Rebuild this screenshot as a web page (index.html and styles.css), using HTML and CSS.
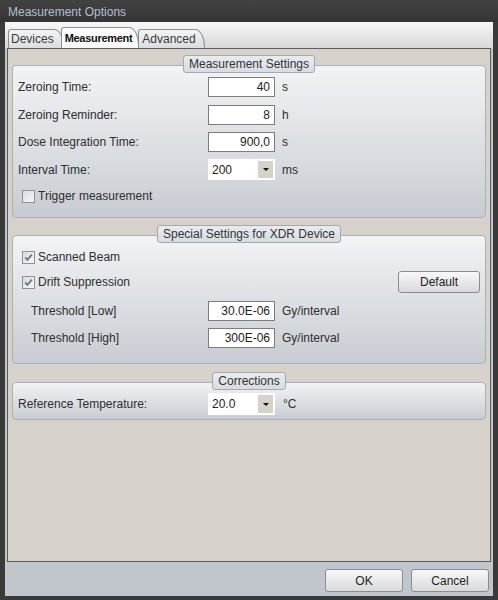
FILE: index.html
```html
<!DOCTYPE html>
<html>
<head>
<meta charset="utf-8">
<link rel="stylesheet" href="styles.css">
</head>
<body>
<div class="window">
  <div class="titlebar">Measurement Options</div>
  <div class="client">
    <div class="tabstrip">
      <div class="tab tab-devices">Devices</div>
      <div class="tab tab-active">Measurement</div>
      <div class="tab tab-advanced">Advanced</div>
    </div>
    <div class="panel">
      <section class="group">
        <div class="legend">Measurement Settings</div>
        <div class="box box-measure">
          <div class="row"><span class="label">Zeroing Time:</span><span class="input">40</span><span class="unit">s</span></div>
          <div class="row r-gap8"><span class="label">Zeroing Reminder:</span><span class="input">8</span><span class="unit">h</span></div>
          <div class="row r-gap7"><span class="label">Dose Integration Time:</span><span class="input">900,0</span><span class="unit">s</span></div>
          <div class="row row-combo r-gap7"><span class="label">Interval Time:</span><span class="combo"><span class="combo-text">200</span><span class="combo-btn"><span class="arrow"></span></span></span><span class="unit">ms</span></div>
          <div class="row row-check r-gap8"><span class="check"></span><span class="check-label">Trigger measurement</span></div>
        </div>
      </section>
      <section class="group g-special">
        <div class="legend">Special Settings for XDR Device</div>
        <div class="box box-special">
          <div class="row"><span class="check checked"><svg width="11" height="11" viewBox="0 0 11 11"><path d="M2.2 5.4 L4.4 7.8 L8.8 2.6" fill="none" stroke="#6b7683" stroke-width="1.8"/></svg></span><span class="check-label">Scanned Beam</span></div>
          <div class="row row-btn r-gap4"><span class="check checked"><svg width="11" height="11" viewBox="0 0 11 11"><path d="M2.2 5.4 L4.4 7.8 L8.8 2.6" fill="none" stroke="#6b7683" stroke-width="1.8"/></svg></span><span class="check-label">Drift Suppression</span><span class="button btn-default">Default</span></div>
          <div class="row r-gap8"><span class="label indent">Threshold [Low]</span><span class="input">30.0E-06</span><span class="unit">Gy/interval</span></div>
          <div class="row r-gap7"><span class="label indent">Threshold [High]</span><span class="input">300E-06</span><span class="unit">Gy/interval</span></div>
        </div>
      </section>
      <section class="group g-corr">
        <div class="legend">Corrections</div>
        <div class="box box-corr">
          <div class="row row-combo"><span class="label">Reference Temperature:</span><span class="combo"><span class="combo-text">20.0</span><span class="combo-btn"><span class="arrow"></span></span></span><span class="unit unit-c">°C</span></div>
        </div>
      </section>
    </div>
    <div class="footer">
      <span class="button btn-foot">OK</span>
      <span class="button btn-foot">Cancel</span>
    </div>
  </div>
</div>
</body>
</html>
```
FILE: styles.css
```css
html, body {
  margin: 0;
  padding: 0;
  background: #3b3b3b;
}
body {
  font-family: "Liberation Sans", Arial, sans-serif;
  font-size: 12px;
  color: #2e2e2e;
}
.window {
  width: 498px;
  height: 600px;
  background: #3a3a3a;
  display: flex;
  flex-direction: column;
  box-sizing: border-box;
}
.titlebar {
  height: 22px;
  box-sizing: border-box;
  padding: 4px 0 0 8px;
  line-height: 17px;
  color: #b3bfd3;
  background: linear-gradient(#424242, #353535);
  flex: none;
}
.client {
  flex: 1;
  margin: 0 5px 4px 5px;
  background: #c1c6cd;
  display: flex;
  flex-direction: column;
}
.tabstrip {
  height: 26px;
  flex: none;
  display: flex;
  align-items: flex-end;
  background: linear-gradient(#f8f8f8, #d7d7d7);
  padding-left: 3px;
}
.tab {
  position: relative;
  height: 18px;
  line-height: 18px;
  box-sizing: content-box;
  border: 1px solid #8b9096;
  border-bottom: none;
  border-top-left-radius: 3px;
  border-top-right-radius: 10px 18px;
  background: linear-gradient(#f3f4f5, #dadde1);
  color: #3a3a3a;
}
.tab-devices {
  padding: 0 9px 0 2px;
  z-index: 1;
}
.tab-active {
  height: 20px;
  line-height: 21px;
  margin-left: -3px;
  padding: 0 6px 0 3px;
  background: #fbfbfb;
  font-weight: bold;
  font-size: 11px;
  letter-spacing: -0.3px;
  color: #111;
  z-index: 3;
}
.tab-advanced {
  margin-left: -1px;
  padding: 0 8px 0 3px;
  z-index: 2;
}
.panel {
  height: 514px;
  box-sizing: border-box;
  flex: none;
  margin: 0 2px 0 2px;
  border: 1px solid #5b5b5b;
  background: #d6d2cb;
  padding: 6px 4px 0 4px;
  display: flex;
  flex-direction: column;
}
.group {
  display: flex;
  flex-direction: column;
  align-items: center;
}
.g-special {
  margin-top: 7px;
}
.g-corr {
  margin-top: 8px;
}
.legend {
  position: relative;
  z-index: 1;
  height: 18px;
  line-height: 17px;
  box-sizing: border-box;
  padding: 0 5px;
  border: 1px solid #a3a9b0;
  border-radius: 3px;
  background: linear-gradient(#e8ebef, #d7dce1);
  color: #333;
  margin-bottom: -8px;
}
.box {
  align-self: stretch;
  border: 1px solid #abb0b6;
  border-radius: 4px;
  background: linear-gradient(#f2f3f5, #c8ccd2);
  padding: 11px 5px 13px 5px;
  display: flex;
  flex-direction: column;
}
.box-special {
  padding-bottom: 15px;
}
.box-corr {
  padding: 10px 5px 4px 5px;
}
.row {
  display: flex;
  align-items: center;
  height: 20px;
}
.row-combo {
  height: 21px;
}
.box-corr .row-combo {
  height: 22px;
}
.row-check {
  height: 16px;
}
.row-btn {
  height: 22px;
}
.r-gap4 { margin-top: 4px; }
.r-gap7 { margin-top: 7px; }
.r-gap8 { margin-top: 8px; }
.label {
  width: 190px;
  flex: none;
}
.label.indent {
  width: 177px;
  margin-left: 13px;
}
.input {
  width: 67px;
  height: 20px;
  box-sizing: border-box;
  border: 1px solid #7c7c7c;
  background: #fff;
  text-align: right;
  padding-right: 4px;
  line-height: 18px;
  color: #222;
  flex: none;
}
.unit {
  margin-left: 7px;
}
.unit-c {
  margin-left: 8px;
}
.combo {
  width: 67px;
  height: 100%;
  box-sizing: border-box;
  background: #fff;
  display: flex;
  align-items: stretch;
  flex: none;
}
.combo-text {
  flex: 1;
  padding-left: 4px;
  display: flex;
  align-items: center;
  color: #222;
}
.combo-btn {
  width: 15px;
  margin: 2px 2px 2px 0;
  background: #d5d2cc;
  display: flex;
  align-items: center;
  justify-content: center;
}
.arrow {
  width: 0;
  height: 0;
  border-left: 3px solid transparent;
  border-right: 3px solid transparent;
  border-top: 3px solid #111;
}
.check {
  width: 13px;
  height: 13px;
  box-sizing: border-box;
  border: 1px solid #8f9193;
  background: linear-gradient(135deg, #d9dadc, #f7f7f8);
  margin-left: 4px;
  flex: none;
  display: flex;
  align-items: center;
  justify-content: center;
}
.check-label {
  margin-left: 3px;
}
.button {
  box-sizing: border-box;
  border: 1px solid #8a8c8e;
  border-radius: 3px;
  background: linear-gradient(#f8f8f8, #d8d9db);
  display: flex;
  align-items: center;
  justify-content: center;
  color: #222;
}
.btn-default {
  width: 82px;
  height: 22px;
  margin-left: auto;
  margin-right: 0;
}
.footer {
  flex: 1;
  display: flex;
  justify-content: flex-end;
  align-items: flex-start;
  padding: 7px 4px 0 0;
  gap: 8px;
}
.btn-foot {
  width: 78px;
  height: 23px;
}
```
